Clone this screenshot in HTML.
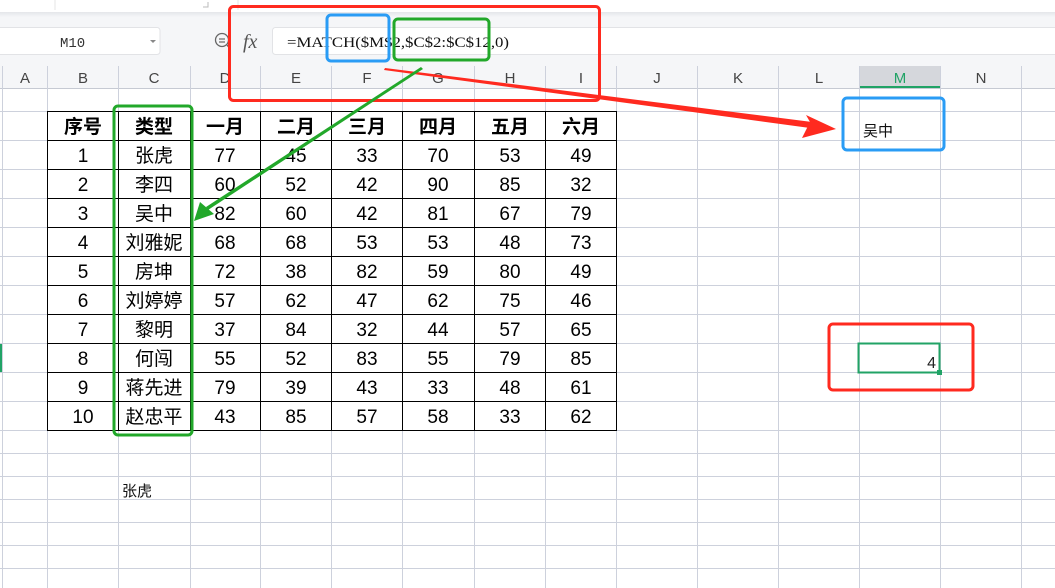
<!DOCTYPE html>
<html><head><meta charset="utf-8"><style>
html,body{margin:0;padding:0;width:1055px;height:588px;overflow:hidden;background:#fff;font-family:"Liberation Sans","Noto Sans CJK SC",sans-serif}
svg{position:absolute;left:0;top:0}
</style></head><body>
<svg width="1055" height="588" viewBox="0 0 1055 588" xmlns="http://www.w3.org/2000/svg" font-family="Liberation Sans, Noto Sans CJK SC, sans-serif">
<defs><linearGradient id="sh" x1="0" y1="0" x2="0" y2="1"><stop offset="0" stop-color="#e4e6ea"/><stop offset="1" stop-color="#f5f6f8"/></linearGradient></defs>
<rect x="0" y="0" width="1055" height="12" fill="#fff"/>
<line x1="55" y1="0" x2="55" y2="10" stroke="#e6e6e6"/><line x1="238" y1="0" x2="238" y2="10" stroke="#e6e6e6"/>
<path d="M208 2 V7 H203" stroke="#bbb" fill="none"/>
<rect x="0" y="12" width="1055" height="54" fill="#f5f6f8"/>
<rect x="0" y="12" width="1055" height="5" fill="url(#sh)"/>
<rect x="-5" y="27.5" width="165" height="27" rx="3" fill="#fff" stroke="#e2e3e6"/>
<text x="60" y="47" font-size="14" fill="#333" font-family="Liberation Mono, monospace">M10</text>
<path d="M150 40 l3 3 l3 -3z" fill="#888"/>
<circle cx="222" cy="40" r="6.5" stroke="#666" stroke-width="1.3" fill="none"/>
<line x1="219" y1="39" x2="225" y2="39" stroke="#666" stroke-width="1.2"/><line x1="219" y1="42" x2="225" y2="42" stroke="#666" stroke-width="1.2"/>
<line x1="227" y1="45" x2="230" y2="49" stroke="#666" stroke-width="1.2"/>
<text x="243" y="48" font-size="20" font-style="italic" fill="#555" font-family="Liberation Serif, serif">fx</text>
<rect x="272.5" y="27.5" width="800" height="27" rx="3" fill="#fff" stroke="#e2e3e6"/>
<text x="287" y="47" font-size="15" fill="#111" font-family="Liberation Serif, serif" textLength="222" lengthAdjust="spacingAndGlyphs">=MATCH($M$2,$C$2:$C$12,0)</text>
<rect x="0" y="66" width="1055" height="22" fill="#f5f6f8"/>
<rect x="859" y="66" width="81" height="22" fill="#d5d7dc"/>
<line x1="859" y1="87" x2="940" y2="87" stroke="#21a366" stroke-width="2"/>
<line x1="0" y1="88.5" x2="1055" y2="88.5" stroke="#c6cad3"/>
<g font-size="15" fill="#444" text-anchor="middle">
<text x="25" y="83">A</text><text x="83" y="83">B</text><text x="154" y="83">C</text><text x="225" y="83">D</text><text x="296" y="83">E</text><text x="367" y="83">F</text><text x="438" y="83">G</text><text x="510" y="83">H</text><text x="581" y="83">I</text><text x="657" y="83">J</text><text x="738" y="83">K</text><text x="819" y="83">L</text><text x="900" y="83" fill="#21a366">M</text><text x="981" y="83">N</text>
</g>
<g stroke="#cdd1dc" stroke-width="1">
<line x1="2.5" y1="66" x2="2.5" y2="588"/>
<line x1="47.5" y1="66" x2="47.5" y2="588"/><line x1="118.5" y1="66" x2="118.5" y2="588"/><line x1="190.5" y1="66" x2="190.5" y2="588"/><line x1="260.5" y1="66" x2="260.5" y2="588"/><line x1="331.5" y1="66" x2="331.5" y2="588"/><line x1="402.5" y1="66" x2="402.5" y2="588"/><line x1="474.5" y1="66" x2="474.5" y2="588"/><line x1="545.5" y1="66" x2="545.5" y2="588"/><line x1="616.5" y1="66" x2="616.5" y2="588"/><line x1="697.5" y1="66" x2="697.5" y2="588"/><line x1="778.5" y1="66" x2="778.5" y2="588"/><line x1="859.5" y1="66" x2="859.5" y2="588"/><line x1="940.5" y1="66" x2="940.5" y2="588"/><line x1="1021.5" y1="66" x2="1021.5" y2="588"/>
<line x1="0" y1="111.5" x2="1055" y2="111.5"/><line x1="0" y1="140.5" x2="1055" y2="140.5"/><line x1="0" y1="169.5" x2="1055" y2="169.5"/><line x1="0" y1="198.5" x2="1055" y2="198.5"/><line x1="0" y1="227.5" x2="1055" y2="227.5"/><line x1="0" y1="256.5" x2="1055" y2="256.5"/><line x1="0" y1="285.5" x2="1055" y2="285.5"/><line x1="0" y1="314.5" x2="1055" y2="314.5"/><line x1="0" y1="343.5" x2="1055" y2="343.5"/><line x1="0" y1="372.5" x2="1055" y2="372.5"/><line x1="0" y1="401.5" x2="1055" y2="401.5"/><line x1="0" y1="430.5" x2="1055" y2="430.5"/><line x1="0" y1="453.5" x2="1055" y2="453.5"/><line x1="0" y1="476.5" x2="1055" y2="476.5"/><line x1="0" y1="499.5" x2="1055" y2="499.5"/><line x1="0" y1="522.5" x2="1055" y2="522.5"/><line x1="0" y1="545.5" x2="1055" y2="545.5"/><line x1="0" y1="568.5" x2="1055" y2="568.5"/>
</g>
<rect x="0" y="344" width="2" height="28" fill="#21a366"/>
<rect x="48" y="112" width="568" height="318" fill="#fff"/>
<g stroke="#000" stroke-width="1">
<line x1="47.5" y1="111" x2="47.5" y2="431"/><line x1="118.5" y1="111" x2="118.5" y2="431"/><line x1="190.5" y1="111" x2="190.5" y2="431"/><line x1="260.5" y1="111" x2="260.5" y2="431"/><line x1="331.5" y1="111" x2="331.5" y2="431"/><line x1="402.5" y1="111" x2="402.5" y2="431"/><line x1="474.5" y1="111" x2="474.5" y2="431"/><line x1="545.5" y1="111" x2="545.5" y2="431"/><line x1="616.5" y1="111" x2="616.5" y2="431"/>
<line x1="47" y1="111.5" x2="617" y2="111.5"/><line x1="47" y1="140.5" x2="617" y2="140.5"/><line x1="47" y1="169.5" x2="617" y2="169.5"/><line x1="47" y1="198.5" x2="617" y2="198.5"/><line x1="47" y1="227.5" x2="617" y2="227.5"/><line x1="47" y1="256.5" x2="617" y2="256.5"/><line x1="47" y1="285.5" x2="617" y2="285.5"/><line x1="47" y1="314.5" x2="617" y2="314.5"/><line x1="47" y1="343.5" x2="617" y2="343.5"/><line x1="47" y1="372.5" x2="617" y2="372.5"/><line x1="47" y1="401.5" x2="617" y2="401.5"/><line x1="47" y1="430.5" x2="617" y2="430.5"/>
</g>
<g font-size="19" fill="#000" text-anchor="middle" font-weight="bold">
<text x="83" y="133">序号</text><text x="154" y="133">类型</text><text x="225" y="133">一月</text><text x="296" y="133">二月</text><text x="367" y="133">三月</text><text x="438" y="133">四月</text><text x="510" y="133">五月</text><text x="581" y="133">六月</text>
</g>
<g font-size="19" fill="#000" text-anchor="middle">
<text x="83" y="162">1</text><text x="154" y="162">张虎</text><text x="225" y="162">77</text><text x="296" y="162">45</text><text x="367" y="162">33</text><text x="438" y="162">70</text><text x="510" y="162">53</text><text x="581" y="162">49</text>
<text x="83" y="191">2</text><text x="154" y="191">李四</text><text x="225" y="191">60</text><text x="296" y="191">52</text><text x="367" y="191">42</text><text x="438" y="191">90</text><text x="510" y="191">85</text><text x="581" y="191">32</text>
<text x="83" y="220">3</text><text x="154" y="220">吴中</text><text x="225" y="220">82</text><text x="296" y="220">60</text><text x="367" y="220">42</text><text x="438" y="220">81</text><text x="510" y="220">67</text><text x="581" y="220">79</text>
<text x="83" y="249">4</text><text x="154" y="249">刘雅妮</text><text x="225" y="249">68</text><text x="296" y="249">68</text><text x="367" y="249">53</text><text x="438" y="249">53</text><text x="510" y="249">48</text><text x="581" y="249">73</text>
<text x="83" y="278">5</text><text x="154" y="278">房坤</text><text x="225" y="278">72</text><text x="296" y="278">38</text><text x="367" y="278">82</text><text x="438" y="278">59</text><text x="510" y="278">80</text><text x="581" y="278">49</text>
<text x="83" y="307">6</text><text x="154" y="307">刘婷婷</text><text x="225" y="307">57</text><text x="296" y="307">62</text><text x="367" y="307">47</text><text x="438" y="307">62</text><text x="510" y="307">75</text><text x="581" y="307">46</text>
<text x="83" y="336">7</text><text x="154" y="336">黎明</text><text x="225" y="336">37</text><text x="296" y="336">84</text><text x="367" y="336">32</text><text x="438" y="336">44</text><text x="510" y="336">57</text><text x="581" y="336">65</text>
<text x="83" y="365">8</text><text x="154" y="365">何闯</text><text x="225" y="365">55</text><text x="296" y="365">52</text><text x="367" y="365">83</text><text x="438" y="365">55</text><text x="510" y="365">79</text><text x="581" y="365">85</text>
<text x="83" y="394">9</text><text x="154" y="394">蒋先进</text><text x="225" y="394">79</text><text x="296" y="394">39</text><text x="367" y="394">43</text><text x="438" y="394">33</text><text x="510" y="394">48</text><text x="581" y="394">61</text>
<text x="83" y="423">10</text><text x="154" y="423">赵忠平</text><text x="225" y="423">43</text><text x="296" y="423">85</text><text x="367" y="423">57</text><text x="438" y="423">58</text><text x="510" y="423">33</text><text x="581" y="423">62</text>
</g>
<text x="122" y="496" font-size="15" fill="#111">张虎</text>
<text x="863" y="136" font-size="15" fill="#111">吴中</text>
<text x="936" y="368" font-size="16" fill="#222" text-anchor="end">4</text>
<rect x="858.5" y="343.5" width="81" height="29" fill="none" stroke="#21a366" stroke-width="2"/>
<rect x="937" y="370" width="5" height="5" fill="#21a366"/>
<rect x="229.5" y="6.5" width="370" height="94" rx="4" fill="none" stroke="#ff2a1f" stroke-width="3"/>
<rect x="327" y="15" width="62" height="46" rx="4" fill="none" stroke="#2a9cf5" stroke-width="3"/>
<rect x="394" y="19" width="95" height="41" rx="4" fill="none" stroke="#22a82a" stroke-width="3"/>
<rect x="114" y="106" width="78" height="329" rx="4" fill="none" stroke="#22a82a" stroke-width="3"/>
<rect x="843" y="98" width="101" height="52" rx="4" fill="none" stroke="#2a9cf5" stroke-width="3"/>
<rect x="829" y="324" width="144" height="66" rx="4" fill="none" stroke="#ff2a1f" stroke-width="3"/>
<path d="M385 68 L812 122 L810 128 L384 70 Z" fill="#ff2a1f"/>
<path d="M836 129 L806 115 L810 122 L802 138 Z" fill="#ff2a1f"/>
<path d="M421 67 L423 69 L208 210 L206 207 Z" fill="#22a82a"/>
<path d="M194 221 L200 202 L214 214 Z" fill="#22a82a"/>
</svg>
</body></html>
